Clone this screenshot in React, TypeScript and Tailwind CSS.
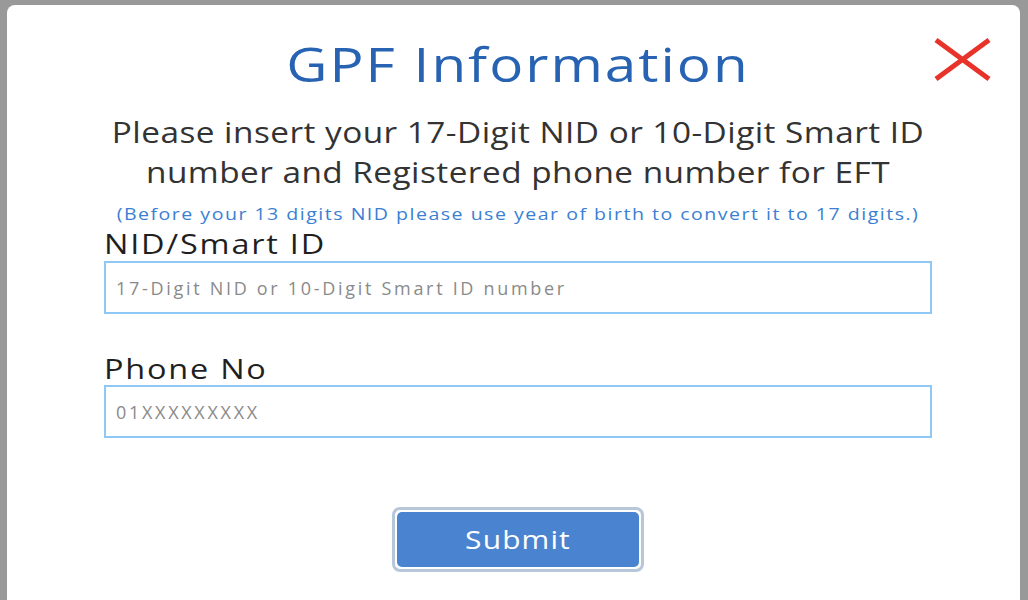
import { useState } from 'react';

// GPF information dialog over a dimmed page
function CloseIcon() {
  return (
    <svg width="59" height="45" viewBox="0 0 59 45" aria-hidden="true">
      <path d="M3 3 L56 42 M56 3 L3 42" stroke="#e8332a" strokeWidth="5" />
    </svg>
  );
}

export default function App() {
  const [nid, setNid] = useState('');
  const [phone, setPhone] = useState('');

  return (
    <div
      className="h-[600px] w-full overflow-hidden bg-[#999999] pt-[5px] pl-[7px] pr-[8px]"
      style={{ fontFamily: '"Open Sans", "Noto Sans", sans-serif' }}
    >
      <div className="relative h-[640px] rounded-lg bg-white pl-[97px] pr-[88px] pt-[31px]">
        <button className="absolute right-[28px] top-[32px]" aria-label="Close">
          <CloseIcon />
        </button>

        {/* the dialog type is set wide, so the text blocks get a horizontal stretch */}
        <h1 className="scale-x-[1.18] text-center text-[48px] leading-[56px] font-normal tracking-[1.7px] text-[#2763b2]">
          GPF Information
        </h1>

        <p className="mt-[20px] scale-x-[1.15] text-center text-[29px] leading-[40px] tracking-[0.4px] text-[#333333]">
          Please insert your 17-Digit NID or 10-Digit Smart ID
          <br />
          number and Registered phone number for EFT
        </p>
        <p className="mt-[10px] scale-x-[1.15] text-center text-[17px] leading-[24px] tracking-[1.3px] text-[#3b7fd4]">
          (Before your 13 digits NID please use year of birth to convert it to 17 digits.)
        </p>

        <label className="mt-[2px] block origin-left scale-x-[1.2] text-[27px] leading-[32px] tracking-[1.5px] text-[#1f1f1f]">
          NID/Smart ID
        </label>
        <input
          value={nid}
          onChange={(e) => setNid(e.target.value)}
          placeholder="17-Digit NID or 10-Digit Smart ID number"
          className="mt-[1px] block h-[53px] w-full border-2 border-[#90c8f5] px-[10px] text-[18px] tracking-[2.7px] text-[#333] outline-none placeholder:text-[#8a8a8a]"
        />

        <label className="mt-[39px] block origin-left scale-x-[1.2] text-[27px] leading-[32px] tracking-[1.5px] text-[#1f1f1f]">
          Phone No
        </label>
        <input
          value={phone}
          onChange={(e) => setPhone(e.target.value)}
          placeholder="01XXXXXXXXX"
          className="block h-[53px] w-full border-2 border-[#90c8f5] px-[10px] text-[18px] tracking-[2.7px] text-[#333] outline-none placeholder:text-[#8a8a8a]"
        />

        <div className="mt-[69px] flex justify-center">
          <div className="rounded-[8px] border-[3px] border-[#b8c6d9] p-[2px]">
            <button className="block h-[55px] w-[242px] rounded-[5px] bg-[#4a84d0] text-[26px] text-white">
              <span className="inline-block scale-x-[1.15] tracking-[1px]">Submit</span>
            </button>
          </div>
        </div>
      </div>
    </div>
  );
}
